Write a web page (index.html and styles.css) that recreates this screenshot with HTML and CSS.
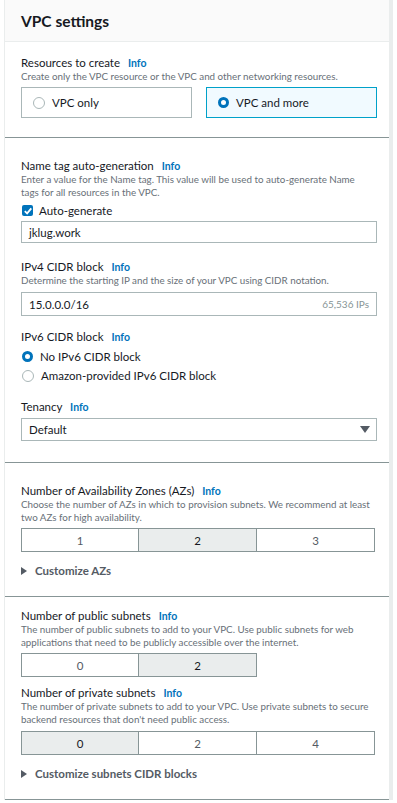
FILE: index.html
```html
<!DOCTYPE html>
<html lang="en">
<head>
    <meta charset="UTF-8">
    <link rel="stylesheet" href="styles.css">
</head>
<body>
    <div class="panel">
        <div class="panel-header">
            <h2>VPC settings</h2>
        </div>

        <div class="section first">
            <div class="label">Resources to create <span class="info">Info</span></div>
            <div class="desc">Create only the VPC resource or the VPC and other networking resources.</div>
            <div class="tiles">
                <div class="tile"><span class="radio"></span>VPC only</div>
                <div class="tile selected"><span class="radio checked"></span>VPC and more</div>
            </div>
        </div>

        <div class="section details">
            <div class="field">
                <div class="label">Name tag auto-generation <span class="info">Info</span></div>
                <div class="desc narrow">Enter a value for the Name tag. This value will be used to auto-generate Name tags for all resources in the VPC.</div>
                <div class="check-row">
                    <span class="checkbox">
                        <svg width="10" height="10" viewBox="0 0 10 10"><path d="M1.8 5.2 L4.1 7.4 L8.3 2.4" fill="none" stroke="#fff" stroke-width="1.8"/></svg>
                    </span>
                    Auto-generate
                </div>
                <div class="input">jklug.work</div>
            </div>

            <div class="field">
                <div class="label">IPv4 CIDR block <span class="info">Info</span></div>
                <div class="desc">Determine the starting IP and the size of your VPC using CIDR notation.</div>
                <div class="input cidr">15.0.0.0/16 <span class="hint">65,536 IPs</span></div>
            </div>

            <div class="field ipv6">
                <div class="label">IPv6 CIDR block <span class="info">Info</span></div>
                <div class="radio-row"><span class="radio checked"></span>No IPv6 CIDR block</div>
                <div class="radio-row"><span class="radio"></span>Amazon-provided IPv6 CIDR block</div>
            </div>

            <div class="field tenancy">
                <div class="label">Tenancy <span class="info">Info</span></div>
                <div class="input select">Default
                    <svg width="10" height="8" viewBox="0 0 10 8"><path d="M0 0 L10 0 L5 7 Z" fill="#545b64"/></svg>
                </div>
            </div>
        </div>

        <div class="section">
            <div class="label">Number of Availability Zones (AZs) <span class="info">Info</span></div>
            <div class="desc">Choose the number of AZs in which to provision subnets. We recommend at least two AZs for high availability.</div>
            <div class="segments">
                <div class="seg">1</div>
                <div class="seg active">2</div>
                <div class="seg">3</div>
            </div>
            <div class="expander"><span class="caret"></span>Customize AZs</div>
        </div>

        <div class="section subnets">
            <div class="field">
                <div class="label">Number of public subnets <span class="info">Info</span></div>
                <div class="desc">The number of public subnets to add to your VPC. Use public subnets for web applications that need to be publicly accessible over the internet.</div>
                <div class="segments">
                    <div class="seg">0</div>
                    <div class="seg active">2</div>
                </div>
            </div>
            <div class="field tight">
                <div class="label">Number of private subnets <span class="info">Info</span></div>
                <div class="desc">The number of private subnets to add to your VPC. Use private subnets to secure backend resources that don't need public access.</div>
                <div class="segments">
                    <div class="seg active">0</div>
                    <div class="seg">2</div>
                    <div class="seg">4</div>
                </div>
            </div>
            <div class="expander"><span class="caret"></span>Customize subnets CIDR blocks</div>
        </div>
    </div>
</body>
</html>
```

FILE: styles.css
```css
body {
    margin: 0;
    font-family: Lato, "Liberation Sans", sans-serif;
    color: #16191f;
    background: #fff;
}
.panel {
    margin: 0 4px;
    width: 389px;
    border-left: 1px solid #eaeded;
    border-right: 4px solid #eaeded;
    box-sizing: border-box;
}
.panel-header {
    background: #fafafa;
    border-bottom: 1px solid #eaeded;
    height: 42px;
    box-sizing: border-box;
    padding: 12px 16px 0;
}
.panel-header h2 {
    margin: 0;
    font-size: 15.5px;
    font-weight: 700;
    line-height: 18px;
}
.section {
    border-bottom: 1px solid #879596;
    padding: 21px 12px 19px 16px;
}
.section.first {
    padding-top: 14px;
    padding-bottom: 19px;
}
.section.details {
    padding-bottom: 21px;
}
.section.subnets {
    padding-top: 12px;
    padding-bottom: 19px;
}
.field + .field {
    margin-top: 17px;
}
.field.ipv6 {
    margin-top: 14px;
}
.field.tenancy {
    margin-top: 18px;
}
.field.tight {
    margin-top: 9px;
}
.label {
    font-size: 11.5px;
    line-height: 14px;
}
.info {
    color: #0073bb;
    font-weight: 700;
    font-size: 10.5px;
    margin-left: 5px;
}
.desc {
    font-size: 9.8px;
    line-height: 13px;
    color: #687078;
}
.desc.narrow {
    max-width: 345px;
}
.tiles {
    display: flex;
    gap: 14px;
    margin-top: 4px;
}
.tile {
    flex: 1;
    height: 31px;
    box-sizing: border-box;
    border: 1px solid #aab7b8;
    display: flex;
    align-items: center;
    padding-left: 11px;
    font-size: 11.5px;
}
.tile.selected {
    background: #f1faff;
    border-color: #00a1c9;
}
.radio {
    width: 10px;
    height: 10px;
    border: 1px solid #aab7b8;
    border-radius: 50%;
    margin-right: 7px;
    box-sizing: content-box;
    display: inline-block;
    background: #fff;
}
.radio.checked {
    border: 3.5px solid #0073bb;
    width: 5px;
    height: 5px;
}
.check-row {
    display: flex;
    align-items: center;
    font-size: 11.5px;
    margin-top: 5px;
}
.checkbox {
    width: 11px;
    height: 11px;
    background: #0073bb;
    border-radius: 2px;
    display: inline-flex;
    align-items: center;
    justify-content: center;
    margin: 0 6px 0 1px;
}
.input {
    margin-top: 4px;
    height: 22px;
    border: 1px solid #aab7b8;
    box-sizing: border-box;
    display: flex;
    align-items: center;
    padding: 0 7px;
    font-size: 11.5px;
}
.cidr {
    height: 24px;
    margin-top: 5px;
}
.hint {
    margin-left: auto;
    font-size: 10px;
    color: #879596;
}
.select {
    justify-content: space-between;
    padding-right: 6px;
    margin-top: 4px;
    height: 23px;
}
.radio-row {
    display: flex;
    align-items: center;
    font-size: 11.5px;
    margin-top: 6px;
}
.radio-row .radio {
    margin-left: 1px;
}
.segments {
    display: grid;
    grid-template-columns: repeat(3, 118px);
    margin-top: 4px;
}
.tight .segments {
    margin-top: 5px;
}
.seg {
    height: 24px;
    box-sizing: border-box;
    border: 1px solid #879596;
    display: flex;
    align-items: center;
    justify-content: center;
    font-size: 11.5px;
    color: #545b64;
}
.seg + .seg {
    border-left: none;
}
.seg.active {
    background: #eaeded;
    color: #16191f;
}
.expander {
    display: flex;
    align-items: center;
    font-size: 11.5px;
    font-weight: 700;
    color: #545b64;
    margin-top: 12px;
}
.caret {
    width: 0;
    height: 0;
    border-left: 6px solid #545b64;
    border-top: 4px solid transparent;
    border-bottom: 4px solid transparent;
    margin-right: 8px;
}
```
